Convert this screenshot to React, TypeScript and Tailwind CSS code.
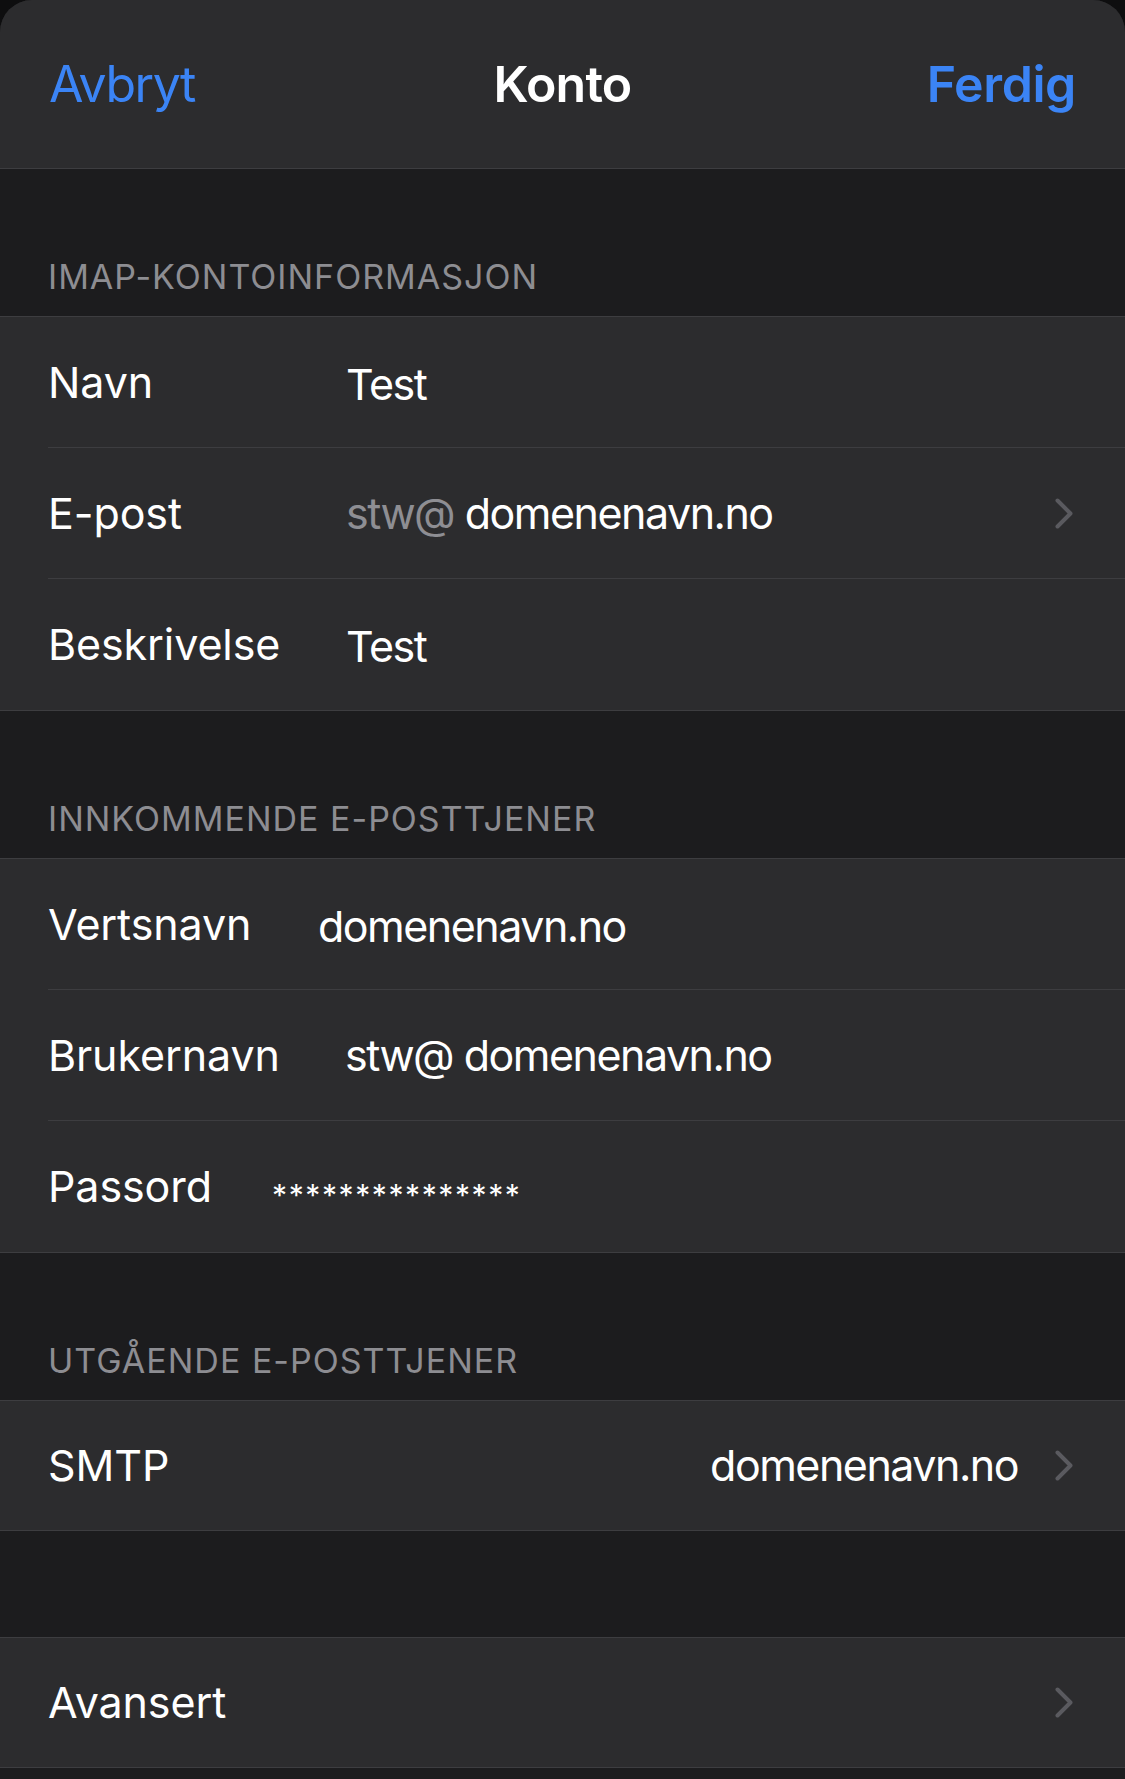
import React from 'react';

type Row = {
  label: string;
  labelWidth: string;
  value?: React.ReactNode;
  chevron?: boolean;
};

const font = { fontFamily: 'Inter, "Noto Sans", sans-serif' };

function Chevron() {
  return (
    <svg width="18" height="31" viewBox="0 0 18 31" className="shrink-0">
      <polyline
        points="2.5,2.5 15.5,15.5 2.5,28.5"
        fill="none"
        stroke="#5a5a5f"
        strokeWidth="4"
        strokeLinecap="round"
        strokeLinejoin="round"
      />
    </svg>
  );
}

function SectionHeader({ title }: { title: string }) {
  return (
    <div className="h-[147px] flex items-end px-[48px] pb-[22px]">
      <span className="text-[34px] leading-[34px] text-[#8d8d92] tracking-[1px]">{title}</span>
    </div>
  );
}

function Group({ rows }: { rows: Row[] }) {
  return (
    <div className="bg-[#2c2c2e] border-y border-[#3d3d40]">
      {rows.map((row, i) => {
        const last = i === rows.length - 1;
        return (
          <div key={row.label} className="pl-[48px] h-[131px]">
            <div
              className={`h-full flex items-center pr-[52px] ${last ? '' : 'border-b border-[#3d3d40]'}`}
            >
              <div className={`${row.labelWidth} shrink-0 text-[43px] text-white tracking-[-0.1px]`}>
                {row.label}
              </div>
              <div className="flex-1 text-[43px] text-white tracking-[-1.5px]">{row.value}</div>
              {row.chevron && <Chevron />}
            </div>
          </div>
        );
      })}
    </div>
  );
}

export default function App() {
  const accountRows: Row[] = [
    { label: 'Navn', labelWidth: 'w-[298px]', value: <span className="relative top-[2px]">Test</span> },
    {
      label: 'E-post',
      labelWidth: 'w-[298px]',
      value: (
        <span>
          <span className="text-[#8e8e93]">stw@</span> domenenavn.no
        </span>
      ),
      chevron: true,
    },
    { label: 'Beskrivelse', labelWidth: 'w-[298px]', value: <span className="relative top-[2px]">Test</span> },
  ];

  const incomingRows: Row[] = [
    { label: 'Vertsnavn', labelWidth: 'w-[270px]', value: <span className="relative top-[2px]">domenenavn.no</span> },
    { label: 'Brukernavn', labelWidth: 'w-[297px]', value: 'stw@ domenenavn.no' },
    {
      label: 'Passord',
      labelWidth: 'w-[224px]',
      value: (
        <span className="relative top-[4px] text-[30px] tracking-[1.6px]">***************</span>
      ),
    },
  ];

  return (
    <div className="min-h-screen bg-[#0e0e0f]" style={font}>
      <div className="bg-[#1c1c1e] rounded-t-[32px] overflow-hidden h-[1779px]">
        {/* Nav bar */}
        <div className="h-[169px] bg-[#2c2c2e] border-b border-[#3d3d40] grid grid-cols-3 items-center px-[49px]">
          <button className="justify-self-start text-[50px] text-[#3b84f5] tracking-[-1.5px]">Avbryt</button>
          <div className="justify-self-center text-[50px] font-semibold text-white tracking-[-0.8px]">Konto</div>
          <button className="justify-self-end text-[50px] font-semibold text-[#3b84f5] tracking-[-0.4px]">
            Ferdig
          </button>
        </div>

        <SectionHeader title="IMAP-KONTOINFORMASJON" />
        <Group rows={accountRows} />

        <SectionHeader title="INNKOMMENDE E-POSTTJENER" />
        <Group rows={incomingRows} />

        <SectionHeader title="UTGÅENDE E-POSTTJENER" />
        <div className="bg-[#2c2c2e] border-y border-[#3d3d40] h-[131px] pl-[48px] pr-[52px] flex items-center">
          <div className="flex-1 text-[43px] text-white tracking-[-0.1px]">SMTP</div>
          <div className="text-[43px] text-white tracking-[-1.5px] mr-[37px]">domenenavn.no</div>
          <Chevron />
        </div>

        <div className="h-[106px]" />
        <div className="bg-[#2c2c2e] border-y border-[#3d3d40] h-[131px] pl-[48px] pr-[52px] flex items-center">
          <div className="flex-1 text-[43px] text-white tracking-[-0.1px]">Avansert</div>
          <Chevron />
        </div>
      </div>
    </div>
  );
}
